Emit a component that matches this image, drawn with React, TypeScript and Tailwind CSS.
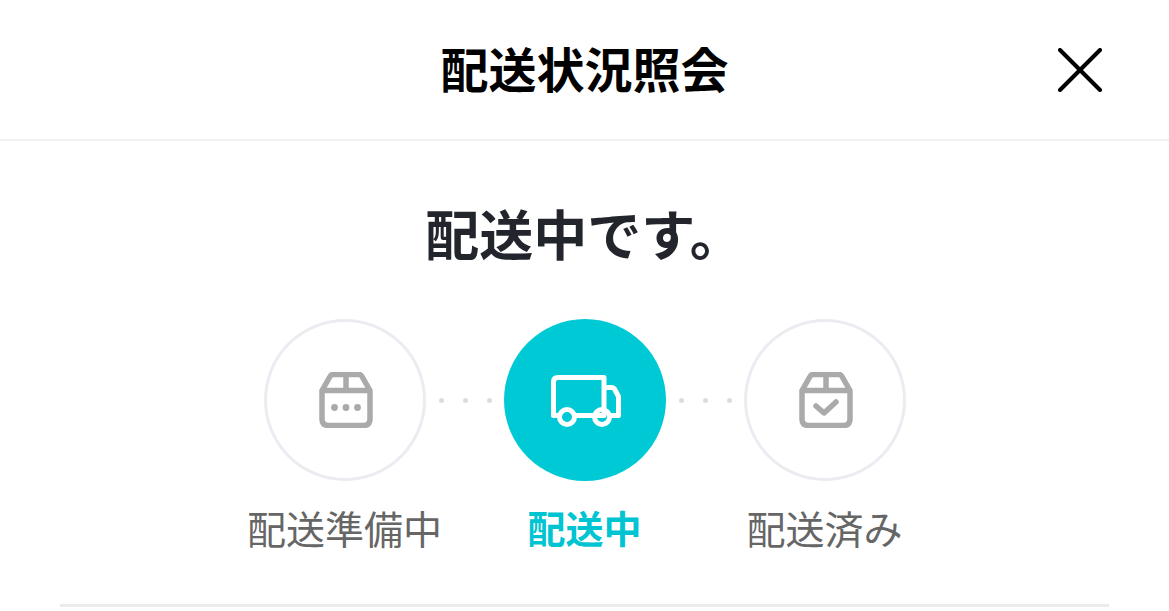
const font = "[font-family:'Noto_Sans_CJK_JP','Noto_Sans',sans-serif]"

function PackageBody({ children }: { children: React.ReactNode }) {
  return (
    <svg width="54" height="56" viewBox="0 0 54 56" fill="none" stroke="#aaaaaa" strokeWidth="5.5" strokeLinejoin="round" className="translate-x-px">
      <path d="M3 18.5 L11 4.5 Q12 2.5 14 2.5 H40 Q42 2.5 43 4.5 L51 18.5 V47 Q51 53.5 44.5 53.5 H9.5 Q3 53.5 3 47 Z" />
      <path d="M3 18.5 H51" />
      <path d="M27 2.5 V18.5" />
      {children}
    </svg>
  )
}

function PreparingIcon() {
  return (
    <PackageBody>
      <circle cx="15.5" cy="35.5" r="3.4" fill="#aaaaaa" stroke="none" />
      <circle cx="27" cy="35.5" r="3.4" fill="#aaaaaa" stroke="none" />
      <circle cx="38.5" cy="35.5" r="3.4" fill="#aaaaaa" stroke="none" />
    </PackageBody>
  )
}

function DeliveredIcon() {
  return (
    <PackageBody>
      <path d="M17 34 L25 41 L37 30" strokeLinecap="round" />
    </PackageBody>
  )
}

function TruckIcon() {
  return (
    <svg width="70" height="52" viewBox="0 0 70 52" fill="none" stroke="#ffffff" strokeWidth="5" strokeLinejoin="round" className="translate-x-px translate-y-px">
      <path d="M8 40.5 H2.5 V7 Q2.5 2.5 7 2.5 H53 V40.5 H25" />
      <path d="M42 40.5 H25" />
      <path d="M53 12.5 H61 Q62.5 12.5 63.5 14 L67.5 21.5 V40.5 H60" />
      <circle cx="16" cy="42" r="7.5" />
      <circle cx="51" cy="42" r="7.5" />
    </svg>
  )
}

function Dots() {
  return (
    <div className="flex h-[162px] w-[78px] items-center justify-center gap-[19px] pl-[2px]">
      <span className="h-[5px] w-[5px] rounded-full bg-[#dcdcdc]" />
      <span className="h-[5px] w-[5px] rounded-full bg-[#dcdcdc]" />
      <span className="h-[5px] w-[5px] rounded-full bg-[#dcdcdc]" />
    </div>
  )
}

function Step({ label, active, children }: { label: string; active?: boolean; children: React.ReactNode }) {
  return (
    <div className="flex w-[162px] flex-col items-center">
      <div
        className={
          active
            ? "flex h-[162px] w-[162px] items-center justify-center rounded-full bg-[#00c9d6]"
            : "flex h-[162px] w-[162px] items-center justify-center rounded-full border-[3px] border-[#ebebf1] bg-white"
        }
      >
        {children}
      </div>
      <span
        className={
          active
            ? "mt-[18px] whitespace-nowrap text-[38px] leading-[56px] font-bold text-[#00c4d2]"
            : "mt-[18px] whitespace-nowrap text-[39px] leading-[56px] font-normal text-[#666666]"
        }
      >
        {label}
      </span>
    </div>
  )
}

export default function App() {
  return (
    <div className={`h-[611px] w-full overflow-hidden bg-white ${font}`}>
      <header className="relative flex h-[141px] items-center justify-center border-b-2 border-[#f2f2f2] pb-[6px]">
        <h1 className="text-[48px] leading-none font-bold text-black">配送状況照会</h1>
        <button className="absolute top-[48px] right-[67px]" aria-label="閉じる">
          <svg width="44" height="44" viewBox="0 0 44 44" fill="none" stroke="#000000" strokeWidth="4" strokeLinecap="round" className="block">
            <path d="M2 2 L42 42" />
            <path d="M42 2 L2 42" />
          </svg>
        </button>
      </header>

      <main className="flex flex-col items-center">
        <h2 className="mt-[62px] text-[54px] leading-[60px] font-bold text-[#22252c]">配送中です。</h2>
        <div className="mt-[56px] flex items-start justify-center">
          <Step label="配送準備中">
            <PreparingIcon />
          </Step>
          <Dots />
          <Step label="配送中" active>
            <TruckIcon />
          </Step>
          <Dots />
          <Step label="配送済み">
            <DeliveredIcon />
          </Step>
        </div>
      </main>

      <div className="mx-[60px] mt-[49px] h-[3px] bg-[#ebebeb]" />
    </div>
  )
}
